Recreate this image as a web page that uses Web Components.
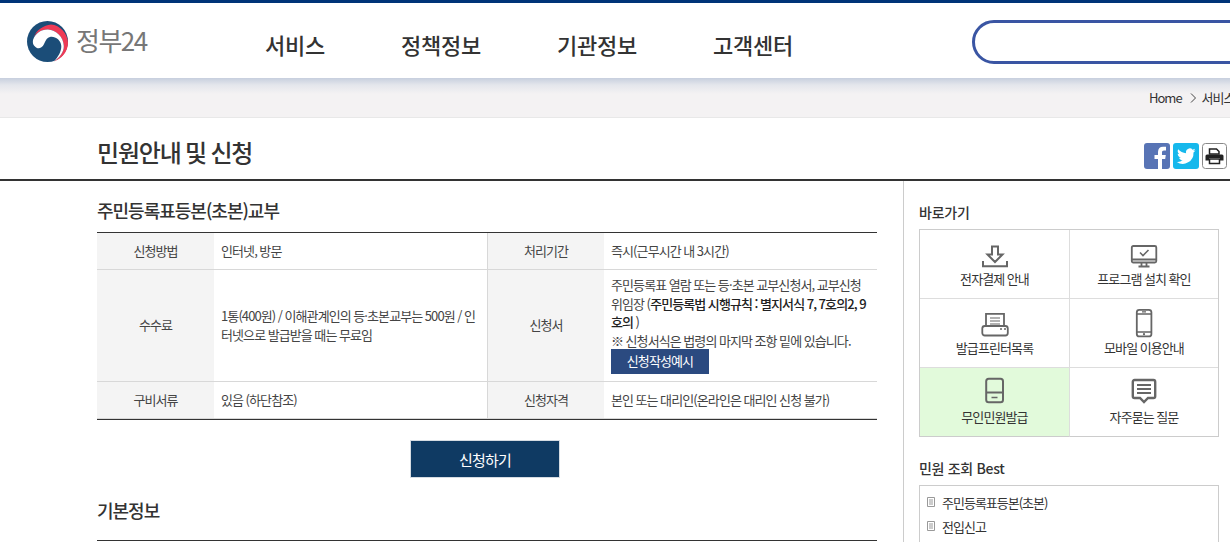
<!DOCTYPE html>
<html lang="ko">
<head>
<meta charset="utf-8">
<title>민원안내 및 신청</title>
<style>
    html, body { margin: 0; height: 542px; overflow: hidden; background: #fff; }
    body { font-family: "Noto Sans CJK KR", "Noto Sans", sans-serif; font-size: 13px; color: #333; letter-spacing: -0.9px; word-spacing: -0.3px; }
    b { font-weight: 500; color: #222; }
</style>
</head>
<body>
<gov-header></gov-header>
<crumb-bar></crumb-bar>
<title-bar>민원안내 및 신청</title-bar>
<page-columns>
    <section>
        <section-title>주민등록표등본(초본)교부</section-title>
        <info-table>
            <info-cell head>신청방법</info-cell>
            <info-cell>인터넷, 방문</info-cell>
            <info-cell head>처리기간</info-cell>
            <info-cell>즉시(근무시간 내 3시간)</info-cell>
            <info-cell head>수수료</info-cell>
            <info-cell>1통(400원) / 이해관계인의 등·초본교부는 500원 / 인터넷으로 발급받을 때는 무료임</info-cell>
            <info-cell head>신청서</info-cell>
            <info-cell tall>주민등록표 열람 또는 등·초본 교부신청서, 교부신청 위임장 (<b>주민등록법 시행규칙 : 별지서식 7, 7호의2, 9</b><wbr><b>호의</b> )<br>※ 신청서식은 법령의 마지막 조항 밑에 있습니다.<br><sample-button>신청작성예시</sample-button></info-cell>
            <info-cell head>구비서류</info-cell>
            <info-cell>있음 (하단참조)</info-cell>
            <info-cell head>신청자격</info-cell>
            <info-cell>본인 또는 대리인(온라인은 대리인 신청 불가)</info-cell>
        </info-table>
        <apply-button>신청하기</apply-button>
        <section-title rule>기본정보</section-title>
    </section>
    <aside>
        <side-title>바로가기</side-title>
        <quick-grid>
            <quick-link>
                <svg slot="icon" viewBox="0 0 30 30" fill="none" stroke="#666" stroke-width="2">
                    <path d="M3 22v5.200h24V22"/>
                    <path d="M12 7.500h6v8h4.500L15 23l-7.500-7.500H12z"/>
                </svg>
                전자결제 안내
            </quick-link>
            <quick-link>
                <svg slot="icon" viewBox="0 0 30 30" fill="none" stroke="#666" stroke-width="1.800">
                    <rect x="2.800" y="7" width="24.500" height="16.500" rx="1.500"/>
                    <path d="M2.800 20.500h24.500M12.500 24v3M17.500 24v3M9.500 27.500h11"/>
                    <path d="M11 13.500l3 3 5.500-5.500" stroke-width="1.600"/>
                </svg>
                프로그램 설치 확인
            </quick-link>
            <quick-link>
                <svg slot="icon" viewBox="0 0 30 30" fill="none" stroke="#666" stroke-width="1.800">
                    <path d="M6 18V5.800h18V18"/>
                    <rect x="2.300" y="18" width="25.500" height="9.500" rx="2.500"/>
                    <path d="M10 10h10M10 13h10M10 16h10" stroke-width="1.200"/>
                    <path d="M20 21h2M24 21h2" stroke-width="1.500"/>
                </svg>
                발급프린터목록
            </quick-link>
            <quick-link>
                <svg slot="icon" viewBox="0 0 30 30" fill="none" stroke="#666" stroke-width="1.800">
                    <rect x="7.800" y="1.800" width="14.600" height="26.600" rx="2.500"/>
                    <path d="M7.800 6h14.600M7.800 24h14.600M13 3.900h4" stroke-width="1.300"/>
                    <circle cx="15" cy="26.200" r="1.100" fill="#666" stroke="none"/>
                </svg>
                모바일 이용안내
            </quick-link>
            <quick-link active>
                <svg slot="icon" viewBox="0 0 30 30" fill="none" stroke="#666" stroke-width="2">
                    <rect x="6.200" y="1.800" width="16.800" height="23.500" rx="2.500"/>
                    <path d="M6.200 15.500h16.800"/>
                    <path d="M11.500 20.500h6" stroke-width="1.500"/>
                </svg>
                무인민원발급
            </quick-link>
            <quick-link>
                <svg slot="icon" viewBox="0 0 30 30" fill="none" stroke="#666" stroke-width="2.400">
                    <path d="M5.500 3h19a1.700 1.700 0 0 1 1.700 1.700v14.600a1.700 1.700 0 0 1-1.700 1.700H19l-4 4-4-4H5.500a1.700 1.700 0 0 1-1.700-1.700V4.700a1.700 1.700 0 0 1 1.700-1.700z"/>
                    <path d="M8 8h14M8 12h14M8 16h14" stroke-width="1.800"/>
                </svg>
                자주묻는 질문
            </quick-link>
        </quick-grid>
        <side-title second>민원 조회 Best</side-title>
        <best-list>
            <best-item>주민등록표등본(초본)</best-item>
            <best-item>전입신고</best-item>
        </best-list>
    </aside>
</page-columns>

<script>
    class GovHeader extends HTMLElement {
        constructor() {
            super();
            this.attachShadow({mode: 'open'});
            this.shadowRoot.innerHTML = `
                <style>
                    :host { display: flex; box-sizing: border-box; height: 78px; border-top: 3px solid #003478; background: #fff; overflow: hidden; align-items: center; }
                    .logo { display: flex; align-items: center; gap: 8px; margin-left: 27px; width: 238px; flex: none; margin-top: 1px; }
                    .logo svg { width: 41px; height: 41px; flex: none; }
                    .logo span { font-size: 26px; color: #777; letter-spacing: -1.500px; font-weight: 400; margin-top: -3px; }
                    nav { display: flex; gap: 76px; font-size: 22px; font-weight: 500; color: #333; letter-spacing: -0.250px; width: 707px; flex: none; margin-top: 6px; }
                    .search { flex: none; box-sizing: border-box; width: 340px; height: 44px; border: 3px solid #3a55a3; border-radius: 22px; margin-top: 3px; }
                </style>
                <div class="logo">
                    <svg viewBox="0 0 41 41">
                        <circle cx="20.500" cy="20.500" r="20.500" fill="#1b4d78"/>
                        <path d="M6.500 17C9 9 17 4 24 3.500 33 4 41 13 41 22c0 9-7 16-14 18.500 6-4.500 10-9.500 9.800-15.500C36.500 16 29 9 21 8.600 14.500 8.300 8.500 12 6.500 17z" fill="#ee3a56"/>
                        <path d="M6 19C8.500 12 14.500 8.300 21 8.600 29 9 36.500 16 36.800 25c.2 6-3.800 11-9.800 15.500 4-4.500 7.500-10 7.300-15.500C34 19 28 15 23 16c-4 .8-4.500 5-6.500 8-1.500 3-5.500 4.500-8 2C6 24 5.500 22 6 19z" fill="#fff"/>
                    </svg>
                    <span>정부24</span>
                </div>
                <nav><span>서비스</span><span>정책정보</span><span>기관정보</span><span>고객센터</span></nav>
                <div class="search"></div>
            `;
        }
    }

    class CrumbBar extends HTMLElement {
        constructor() {
            super();
            this.attachShadow({mode: 'open'});
            this.shadowRoot.innerHTML = `
                <style>
                    :host { display: flex; box-sizing: border-box; height: 40px; padding: 0 0 0 1149px; align-items: center; overflow: hidden; white-space: nowrap; border-bottom: 1px solid #e8e8e8; background: linear-gradient(#c7cfde 0, #e4e6ec 7px, #f4f2f3 16px); font-size: 13px; color: #333; letter-spacing: -1px; }
                    span { flex: none; }
                    svg { width: 6px; height: 10px; margin: 0 6px 0 8px; flex: none; }
                </style>
                <span>Home</span>
                <svg viewBox="0 0 6 10" fill="none" stroke="#444"><path d="M1 .5L5.500 5 1 9.500"/></svg>
                <span>서비스</span>
            `;
        }
    }

    class TitleBar extends HTMLElement {
        constructor() {
            super();
            this.attachShadow({mode: 'open'});
            this.shadowRoot.innerHTML = `
                <style>
                    :host { display: flex; box-sizing: border-box; height: 63px; padding: 0 3px 0 97px; align-items: center; justify-content: space-between; border-bottom: 2px solid #333; }
                    h1 { margin: 5px 0 0; font-size: 24px; font-weight: 500; color: #333; letter-spacing: -1.200px; word-spacing: -1px; }
                    .tools { display: flex; gap: 3px; margin-top: 14px; }
                    svg { width: 26px; height: 26px; display: block; }
                </style>
                <h1><slot></slot></h1>
                <div class="tools">
                    <svg viewBox="0 0 26 26"><rect width="26" height="26" rx="3" fill="#5874b5"/><path d="M14 26V16h-3.500v-4H14V9c0-3.500 2-5.200 5-5.200h3V7.500h-2c-1.500 0-2 .7-2 2V12h3.800l-.6 4H18v10z" fill="#fff"/></svg>
                    <svg viewBox="0 0 26 26"><rect width="26" height="26" rx="3" fill="#16b8ec"/><path d="M22.500 7.300c-.7.3-1.400.5-2.200.6.800-.5 1.400-1.200 1.700-2.100-.7.400-1.600.8-2.400.9a3.800 3.800 0 0 0-6.500 3.500c-3.200-.2-6-1.700-7.900-4-.3.600-.5 1.200-.5 1.900 0 1.300.7 2.500 1.700 3.200-.6 0-1.200-.2-1.700-.5 0 1.900 1.300 3.400 3 3.800-.6.200-1.200.2-1.700.1.500 1.500 1.900 2.600 3.600 2.600A7.700 7.700 0 0 1 3.800 19a10.800 10.800 0 0 0 16.700-9.600c.8-.5 1.400-1.300 2-2.100z" fill="#fff"/></svg>
                    <svg viewBox="0 0 25 26" style="width:25px"><rect x=".5" y=".5" width="24" height="25" rx="3" fill="#fff" stroke="#888"/><path d="M7.500 6h7l2.500 2.500V11H7.500z" fill="#fff" stroke="#222" stroke-width="1.500"/><path d="M5 11.500h15a1.500 1.500 0 0 1 1.500 1.500v4.500H18V15H7v2.500H3.500V13A1.500 1.500 0 0 1 5 11.500z" fill="#222"/><path d="M7.500 16h10v4.500h-10z" fill="#fff" stroke="#222" stroke-width="1.500"/></svg>
                </div>
            `;
        }
    }

    class PageColumns extends HTMLElement {
        constructor() {
            super();
            this.attachShadow({mode: 'open'});
            this.shadowRoot.innerHTML = `
                <style>
                    :host { display: grid; grid-template-columns: 807px 1fr; padding-left: 97px; height: 361px; overflow: hidden; }
                    ::slotted(section) { border-right: 1px solid #ccc; }
                    ::slotted(aside) { padding-left: 15px; }
                </style>
                <slot></slot>
            `;
        }
    }

    class SectionTitle extends HTMLElement {
        constructor() {
            super();
            this.attachShadow({mode: 'open'});
            this.shadowRoot.innerHTML = `
                <style>
                    :host { display: block; box-sizing: border-box; width: 780px; height: 51px; padding-top: 16px; font-size: 18px; font-weight: 500; line-height: 26px; color: #333; letter-spacing: -1px; }
                    :host([rule]) { height: 61px; padding-top: 17px; margin-top: 2px; border-bottom: 1px solid #333; }
                </style>
                <slot></slot>
            `;
        }
    }

    class InfoTable extends HTMLElement {
        constructor() {
            super();
            this.attachShadow({mode: 'open'});
            this.shadowRoot.innerHTML = `
                <style>
                    :host { display: grid; width: 780px; grid-template-columns: 117px 273px 117px 273px; border-top: 1px solid #333; border-bottom: 1px solid #333; }
                </style>
                <slot></slot>
            `;
        }
    }

    class InfoCell extends HTMLElement {
        constructor() {
            super();
            this.attachShadow({mode: 'open'});
            this.shadowRoot.innerHTML = `
                <style>
                    :host { display: flex; flex-direction: column; justify-content: center; box-sizing: border-box; min-height: 37px; padding: 1px 7px 0; border-bottom: 1px solid #d8d8d8; line-height: 18.700px; color: #444; }
                    :host([tall]) { padding: 6px 7px 7px; }
                    :host([head]) { align-items: center; background: #f4f4f4; color: #444; padding: 0; }
                    :host([head]:nth-of-type(4n+3)) { border-left: 1px solid #d8d8d8; }
                </style>
                <div><slot></slot></div>
            `;
        }
    }

    class SampleButton extends HTMLElement {
        constructor() {
            super();
            this.attachShadow({mode: 'open'});
            this.shadowRoot.innerHTML = `
                <style>
                    :host { display: inline-flex; box-sizing: border-box; width: 98px; height: 25px; margin-top: -1.800px; align-items: center; justify-content: center; background: #2b4a80; color: #fff; vertical-align: top; }
                </style>
                <slot></slot>
            `;
        }
    }

    class ApplyButton extends HTMLElement {
        constructor() {
            super();
            this.attachShadow({mode: 'open'});
            this.shadowRoot.innerHTML = `
                <style>
                    :host { display: flex; justify-content: center; width: 776px; padding-top: 20px; }
                    button { width: 150px; height: 38px; box-sizing: border-box; border: 1px solid #d5dbe2; background: #0f3a63; color: #fff; font: inherit; font-size: 15px; letter-spacing: -0.800px; padding: 0; }
                </style>
                <button><slot></slot></button>
            `;
        }
    }

    class SideTitle extends HTMLElement {
        constructor() {
            super();
            this.attachShadow({mode: 'open'});
            this.shadowRoot.innerHTML = `
                <style>
                    :host { display: block; height: 48px; box-sizing: border-box; padding-top: 21px; font-size: 14px; line-height: 20px; font-weight: 500; color: #333; letter-spacing: -0.200px; word-spacing: 0; }
                    :host([second]) { height: 48px; padding-top: 21px; letter-spacing: -0.300px; }
                </style>
                <slot></slot>
            `;
        }
    }

    class QuickGrid extends HTMLElement {
        constructor() {
            super();
            this.attachShadow({mode: 'open'});
            this.shadowRoot.innerHTML = `
                <style>
                    :host { display: grid; box-sizing: border-box; width: 300px; grid-template-columns: 150px 148px; grid-auto-rows: 69px; border: 1px solid #ccc; border-bottom-width: 0; background: #fff; }
                </style>
                <slot></slot>
            `;
        }
    }

    class QuickLink extends HTMLElement {
        constructor() {
            super();
            this.attachShadow({mode: 'open'});
            this.shadowRoot.innerHTML = `
                <style>
                    :host { display: flex; flex-direction: column; align-items: center; box-sizing: border-box; padding-top: 9px; border-bottom: 1px solid #ddd; font-size: 13px; line-height: 18px; color: #333; }
                    :host(:nth-of-type(odd)) { border-right: 1px solid #ddd; }
                    :host(:nth-last-of-type(-n+2)) { border-bottom-color: #ccc; }
                    :host([active]) { background: #e2fadb; }
                    .icon { display: block; width: 30px; height: 30px; margin-bottom: 1px; }
                </style>
                <div class="icon"><slot name="icon"></slot></div>
                <div><slot></slot></div>
            `;
        }
    }

    class BestList extends HTMLElement {
        constructor() {
            super();
            this.attachShadow({mode: 'open'});
            this.shadowRoot.innerHTML = `
                <style>
                    :host { display: block; box-sizing: border-box; width: 300px; height: 120px; padding: 4px 7px; border: 1px solid #ccc; }
                </style>
                <slot></slot>
            `;
        }
    }

    class BestItem extends HTMLElement {
        constructor() {
            super();
            this.attachShadow({mode: 'open'});
            this.shadowRoot.innerHTML = `
                <style>
                    :host { display: flex; align-items: center; gap: 7px; height: 24px; font-size: 13px; color: #333; letter-spacing: -1px; }
                    svg { width: 8px; height: 10px; flex: none; }
                </style>
                <svg viewBox="0 0 8 10" fill="none" stroke="#999"><path d="M.5.5h7v9h-7zM2 3h4M2 5h4M2 7h4"/></svg>
                <span><slot></slot></span>
            `;
        }
    }

    customElements.define('gov-header', GovHeader);
    customElements.define('crumb-bar', CrumbBar);
    customElements.define('title-bar', TitleBar);
    customElements.define('page-columns', PageColumns);
    customElements.define('section-title', SectionTitle);
    customElements.define('info-table', InfoTable);
    customElements.define('info-cell', InfoCell);
    customElements.define('sample-button', SampleButton);
    customElements.define('apply-button', ApplyButton);
    customElements.define('side-title', SideTitle);
    customElements.define('quick-grid', QuickGrid);
    customElements.define('quick-link', QuickLink);
    customElements.define('best-list', BestList);
    customElements.define('best-item', BestItem);
</script>
</body>
</html>
